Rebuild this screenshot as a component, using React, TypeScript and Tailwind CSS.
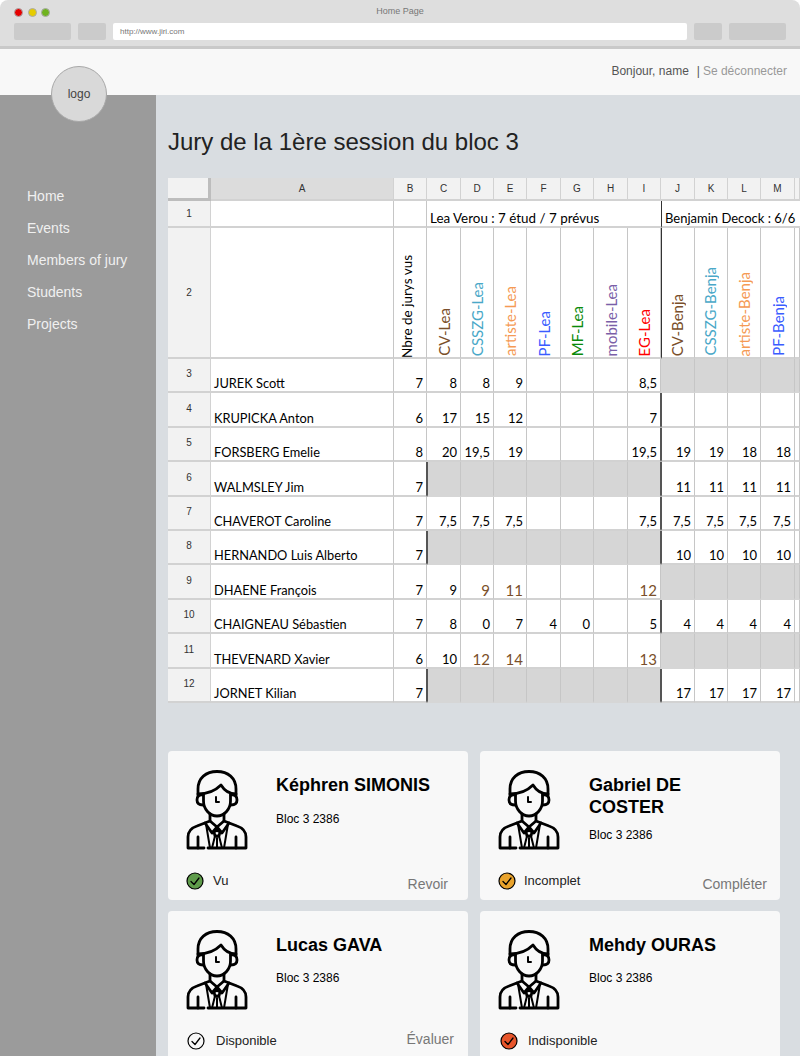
import React from 'react';

const columns = ['A', 'B', 'C', 'D', 'E', 'F', 'G', 'H', 'I', 'J', 'K', 'L', 'M', ''];

const heads = [
  { label: 'CV-Lea', color: 'text-[#7a4f2a]' },
  { label: 'CSSZG-Lea', color: 'text-[#4aa8c8]' },
  { label: 'artiste-Lea', color: 'text-[#f59a54]' },
  { label: 'PF-Lea', color: 'text-[#3a5cff]' },
  { label: 'MF-Lea', color: 'text-[#0a8a0a]' },
  { label: 'mobile-Lea', color: 'text-[#7a5fa8]' },
  { label: 'EG-Lea', color: 'text-[#ff0000]' },
  { label: 'CV-Benja', color: 'text-[#7a4f2a]' },
  { label: 'CSSZG-Benja', color: 'text-[#4aa8c8]' },
  { label: 'artiste-Benja', color: 'text-[#f59a54]' },
  { label: 'PF-Benja', color: 'text-[#3a5cff]' },
  { label: '', color: '' },
];

// lea / benja null means the whole block is greyed out
const rows = [
  { n: 3, name: 'JUREK Scott', seen: '7', lea: ['8', '8', '9', '', '', '', '8,5'], benja: null },
  { n: 4, name: 'KRUPICKA Anton', seen: '6', lea: ['17', '15', '12', '', '', '', '7'], benja: ['', '', '', '', ''] },
  { n: 5, name: 'FORSBERG Emelie', seen: '8', lea: ['20', '19,5', '19', '', '', '', '19,5'], benja: ['19', '19', '18', '18', ''] },
  { n: 6, name: 'WALMSLEY Jim', seen: '7', lea: null, benja: ['11', '11', '11', '11', ''] },
  { n: 7, name: 'CHAVEROT Caroline', seen: '7', lea: ['7,5', '7,5', '7,5', '', '', '', '7,5'], benja: ['7,5', '7,5', '7,5', '7,5', ''] },
  { n: 8, name: 'HERNANDO Luis Alberto', seen: '7', lea: null, benja: ['10', '10', '10', '10', ''] },
  { n: 9, name: 'DHAENE François', seen: '7', lea: ['9', '*9', '*11', '', '', '', '*12'], benja: null },
  { n: 10, name: 'CHAIGNEAU Sébastien', seen: '7', lea: ['8', '0', '7', '4', '0', '', '5'], benja: ['4', '4', '4', '4', ''] },
  { n: 11, name: 'THEVENARD Xavier', seen: '6', lea: ['10', '*12', '*14', '', '', '', '*13'], benja: null },
  { n: 12, name: 'JORNET Kilian', seen: '7', lea: null, benja: ['17', '17', '17', '17', ''] },
];

const students = [
  { name: 'Képhren SIMONIS', status: 'Vu', action: 'Revoir', fill: 'fill-[#5f9c4b]', iconMl: 'ml-0', textMl: 'ml-[9px]', actionMr: 'mr-[20px]', actionMt: 'mt-[5px]', blocMt: 'mt-[15px]', textCol: 'ml-[28px]' },
  { name: 'Gabriel DE COSTER', status: 'Incomplet', action: 'Compléter', fill: 'fill-[#e9a32c]', iconMl: 'ml-0', textMl: 'ml-[8px]', actionMr: 'mr-[13px]', actionMt: 'mt-[5px]', blocMt: 'mt-[9px]', textCol: 'ml-[29px]' },
  { name: 'Lucas GAVA', status: 'Disponible', action: 'Évaluer', fill: 'fill-none', iconMl: 'ml-px', textMl: 'ml-[11px]', actionMr: 'mr-[14px]', actionMt: 'mt-0', blocMt: 'mt-[14px]', textCol: 'ml-[28px]' },
  { name: 'Mehdy OURAS', status: 'Indisponible', action: '', fill: 'fill-[#e7552b]', iconMl: 'ml-[2px]', textMl: 'ml-[10px]', actionMr: 'mr-[14px]', actionMt: 'mt-0', blocMt: 'mt-[14px]', textCol: 'ml-[29px]' },
];

function Juror() {
  return (
    <svg viewBox="0 0 62 80" className="h-[80px] w-[62px] shrink-0 fill-none stroke-black stroke-[2.8]" strokeLinecap="round" strokeLinejoin="round">
      {/* hair */}
      <path d="M12 26V19C12 8 20 1.500 31 1.500s19 6.500 19 17.500v7" />
      <path d="M12 24c9 0 17-3 23-9 3 5 8 9 15 9" />
      {/* face and ears */}
      <path d="M17.500 24v7c0 8 6 15 13.500 15s13.500-7 13.500-15v-7" />
      <path d="M17 25c-3-1-6 1-6 5s3 5 6 5" />
      <path d="M45 25c3-1 6 1 6 5s-3 5-6 5" />
      <path d="M30 27v5h3" strokeWidth="2" />
      {/* neck and shoulders */}
      <path d="M24 44v7l-13 5C5 58 2 62 2 67v11h16" />
      <path d="M38 44v7l13 5c6 2 9 6 9 11v11H22" />
      <path d="M12 67v11M50 67v11" />
      {/* collar and tie */}
      <path d="M19 53l7 10 5-6 5 6 7-10" />
      <path d="M24 51l7 6 7-6" />
      <path d="M28 62l3-2 3 2-1 4h-4z" />
      <path d="M29 66l-3 12M33 66l3 12M31 68v10M20 54l4 24M42 54l-4 24" strokeWidth="2" />
    </svg>
  );
}

function StatusIcon({ fill }: { fill: string }) {
  return (
    <svg viewBox="0 0 18 18" className="h-[18px] w-[18px] shrink-0">
      <circle cx="9" cy="9" r="8" className={`${fill} stroke-black`} strokeWidth="1.200" />
      <path d="M5 9.500l3 3 5-6.500" fill="none" stroke="black" strokeWidth="1.300" strokeLinecap="round" strokeLinejoin="round" />
    </svg>
  );
}

function Cell({ value, grey, dark, darkRight }: { value: string; grey?: boolean; dark?: boolean; darkRight?: boolean }) {
  const accent = value.startsWith('*');
  return (
    <div
      className={`flex items-end justify-end border-b-2 border-r pb-px pr-[3px] ${grey ? 'border-b-[#d6d6d6] bg-[#d6d6d6]' : 'border-b-[#d2d2d2] bg-white'} ${darkRight ? 'border-r-[#555555]' : 'border-r-[#c6c6c6]'} ${dark ? 'border-l border-l-[#555555]' : ''} ${accent ? 'text-[15px] text-[#7a4f2a]' : 'text-[13px] text-black'}`}
    >
      {accent ? value.slice(1) : value}
    </div>
  );
}

function Sheet() {
  return (
    <div className="grid h-[525px] w-[632px] grid-cols-[43px_183px_33px_34px_33px_33px_34px_33px_34px_33px_34px_33px_33px_34px_5px] grid-rows-[23px_27px_131px_34px_35px_34px_35px_34px_34px_35px_34px_35px_34px] font-['Lato',sans-serif] text-[13px] leading-[14px] text-black">
      <div className="border-b-[3px] border-r-[3px] border-b-[#bdbdbd] border-r-[#bdbdbd] bg-[#f2f2f2]" />
      {columns.map((c, i) => (
        <div
          key={i}
          className={`flex items-center justify-center border-b-2 border-r border-b-[#d2d2d2] border-r-[#d2d2d2] font-['Liberation_Sans',sans-serif] text-[10px] text-[#333333] ${c === 'A' ? 'bg-[#dcdcdc]' : 'bg-[#f2f2f2]'}`}
        >
          {c}
        </div>
      ))}

      {/* row 1 */}
      <div className="flex items-center justify-center border-b-2 border-r border-[#d2d2d2] bg-[#f2f2f2] font-['Liberation_Sans',sans-serif] text-[10px] text-[#333333]">1</div>
      <div className="border-b-2 border-r border-b-[#d2d2d2] border-r-[#c6c6c6] bg-white" />
      <div className="border-b-2 border-r border-b-[#d2d2d2] border-r-[#c6c6c6] bg-white" />
      <div className="col-span-7 flex items-end border-b-2 border-b-[#d2d2d2] bg-white pb-px pl-[3px] text-[13.400px]">Lea Verou : 7 étud / 7 prévus</div>
      <div className="col-span-5 flex items-end whitespace-nowrap border-b-2 border-l border-b-[#d2d2d2] border-l-[#333333] bg-white pb-px pl-[3px]">Benjamin Decock : 6/6</div>

      {/* row 2 */}
      <div className="flex items-center justify-center border-b-2 border-r border-[#d2d2d2] bg-[#f2f2f2] font-['Liberation_Sans',sans-serif] text-[10px] text-[#333333]">2</div>
      <div className="border-b-2 border-r border-b-[#d2d2d2] border-r-[#c6c6c6] bg-white" />
      <div className="flex items-start justify-center border-b-2 border-r border-b-[#d2d2d2] border-r-[#c6c6c6] bg-white pr-[6px]">
        <span className="mt-[27px] rotate-180 whitespace-nowrap text-[13.500px] leading-[18px] [writing-mode:vertical-rl]">Nbre de jurys vus</span>
      </div>
      {heads.map((h, i) => (
        <div
          key={i}
          className={`flex items-end justify-center border-b-2 border-r border-b-[#d2d2d2] border-r-[#c6c6c6] bg-white ${i === 7 ? 'border-l border-l-[#333333] pr-[2px]' : ''} ${i === 8 ? 'pr-[2px]' : ''}`}
        >
          {h.label && <span className={`mb-px rotate-180 whitespace-nowrap text-[15px] leading-[18px] [writing-mode:vertical-rl] ${h.color}`}>{h.label}</span>}
        </div>
      ))}

      {/* students */}
      {rows.map((r) => (
        <React.Fragment key={r.n}>
          <div className="flex items-center justify-center border-b-2 border-r border-[#d2d2d2] bg-[#f2f2f2] pb-[2px] font-['Liberation_Sans',sans-serif] text-[10px] text-[#333333]">{r.n}</div>
          <div className="flex items-end border-b-2 border-r border-b-[#d2d2d2] border-r-[#c6c6c6] bg-white pb-px pl-[3px] text-[12.800px]">{r.name}</div>
          <Cell value={r.seen} darkRight={!r.lea} />
          {(r.lea ?? ['', '', '', '', '', '', '']).map((v, i) => (
            <Cell key={i} value={v} grey={!r.lea} dark={!r.lea && i === 0} darkRight={!!r.benja && i === 6} />
          ))}
          {(r.benja ?? ['', '', '', '', '']).map((v, i) => (
            <Cell key={i} value={v} grey={!r.benja} dark={!!r.benja && i === 0} />
          ))}
        </React.Fragment>
      ))}
    </div>
  );
}

function StudentCard({ s }: { s: (typeof students)[number] }) {
  return (
    <div className="flex h-[149px] flex-col overflow-hidden rounded-[4px] bg-[#f8f8f8] pl-[18px] pt-[19px] font-['Liberation_Sans',sans-serif]">
      <div className="flex">
        <Juror />
        <div className={`flex-1 pr-6 pt-[4px] ${s.textCol}`}>
          <h2 className="text-[18px] font-bold leading-[22px] text-black">{s.name}</h2>
          <p className={`text-[12px] leading-[16px] text-black ${s.blocMt}`}>Bloc 3 2386</p>
        </div>
      </div>
      <div className="mt-[21px] flex items-start">
        <div className={`flex items-center ${s.iconMl}`}>
          <StatusIcon fill={s.fill} />
          <span className={`text-[13px] text-[#222222] ${s.textMl}`}>{s.status}</span>
        </div>
        <span className={`ml-auto text-[14px] leading-[16px] text-[#777777] ${s.actionMt} ${s.actionMr}`}>{s.action}</span>
      </div>
    </div>
  );
}

export default function App() {
  return (
    <div className="relative flex h-[1056px] w-[800px] flex-col overflow-hidden bg-white font-['Liberation_Sans',sans-serif]">
      {/* browser chrome */}
      <div className="h-[49px] shrink-0 rounded-t-[8px] border-b-[3px] border-[#c9c9c9] bg-[#dedede] px-[14px]">
        <div className="relative flex h-[23px] items-center justify-center text-[9px] text-[#777777]">
          <div className="absolute left-0 top-[8px] flex gap-[4.500px]">
            <span className="h-[9px] w-[9px] rounded-full border border-[#aaaaaa] bg-[#e60000]" />
            <span className="h-[9px] w-[9px] rounded-full border border-[#aaaaaa] bg-[#e6cc00]" />
            <span className="h-[9px] w-[9px] rounded-full border border-[#aaaaaa] bg-[#6fb31e]" />
          </div>
          Home Page
        </div>
        <div className="flex h-[17px] gap-[7px]">
          <div className="w-[57px] rounded-[2px] bg-[#cbcbcb]" />
          <div className="w-[28px] rounded-[2px] bg-[#cbcbcb]" />
          <div className="flex flex-1 items-center rounded-[2px] bg-white pl-[7px] text-[8px] text-[#777777]">http://www.jiri.com</div>
          <div className="w-[28px] rounded-[2px] bg-[#cbcbcb]" />
          <div className="w-[57px] rounded-[2px] bg-[#cbcbcb]" />
        </div>
      </div>

      {/* top bar */}
      <header className="flex h-[46px] shrink-0 items-center justify-end bg-[#f8f8f8] pb-[2px] pr-[13px] text-[12px]">
        <span className="text-[#555555]">Bonjour, name</span>
        <span className="ml-[8px] text-[#555555]">|</span>
        <span className="ml-[3px] text-[#999999]">Se déconnecter</span>
      </header>

      <div className="absolute left-[51px] top-[66px] flex h-[56px] w-[56px] items-center justify-center rounded-full border border-[#a8a8a8] bg-[#d9d9d9] text-[12px] text-[#444444]">logo</div>

      <div className="flex min-h-0 flex-1">
        <nav className="flex w-[156px] shrink-0 flex-col gap-[12px] bg-[#9b9b9b] pl-[27px] pt-[91px] text-[14px] leading-[20px] text-[#f0f0f0]">
          <a>Home</a>
          <a>Events</a>
          <a>Members of jury</a>
          <a>Students</a>
          <a>Projects</a>
        </nav>

        <main className="min-w-0 flex-1 overflow-hidden bg-[#d9dde1] pl-[12px]">
          <h1 className="mt-[33px] text-[24px] leading-[28px] text-[#222222]">Jury de la 1ère session du bloc 3</h1>
          <div className="mt-[22px] overflow-hidden">
            <Sheet />
          </div>
          <div className="mt-[48px] grid w-[612px] grid-cols-2 gap-x-[12px] gap-y-[11px]">
            {students.map((s) => (
              <StudentCard key={s.name} s={s} />
            ))}
          </div>
        </main>
      </div>
    </div>
  );
}
